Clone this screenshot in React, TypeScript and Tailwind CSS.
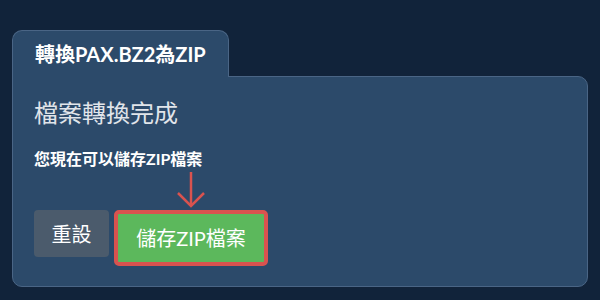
export default function App() {
  return (
    <div
      className="w-[600px] h-[300px] bg-[#11233a] pt-[30px] px-[12px]"
      style={{ fontFamily: '"Lato", "Noto Sans CJK TC", sans-serif' }}
    >
      <div className="relative">
        {/* tab */}
        <div className="relative z-10 w-[217px] h-[47px] rounded-t-[10px] border border-b-0 border-[#4a6585] bg-[#2c4a6a] flex items-center pl-[22px]">
          <span className="text-[20px] font-bold text-white">轉換PAX.BZ2為ZIP</span>
        </div>
        {/* panel */}
        <div className="-mt-px h-[211px] w-[576px] rounded-b-[10px] rounded-tr-[10px] border border-[#4a6585] bg-[#2c4a6a] pl-[21px] pt-[20px]">
          <div className="text-[24px] leading-[32px] font-normal text-[#e1e5ea]">檔案轉換完成</div>
          <div className="mt-[19px] text-[16px] leading-[22px] font-bold text-white">您現在可以儲存ZIP檔案</div>
          <div className="mt-[40px] flex items-start gap-[5px]">
            <button className="h-[47px] w-[75px] rounded-[4px] bg-[#4b5b6c] text-[20px] text-white">
              重設
            </button>
            <div className="relative">
              <svg width="28" height="36" viewBox="0 0 28 36" className="absolute left-[63px] -top-[38px]">
                <line x1="14" y1="0" x2="14" y2="34" stroke="#d9534f" strokeWidth="2.5" />
                <polyline points="1,21 14,34 27,21" fill="none" stroke="#d9534f" strokeWidth="2.5" />
              </svg>
              <button className="h-[56px] w-[154px] rounded-[5px] border-[4px] border-[#d9534f] bg-[#5cb85c] text-[20px] text-white">
                儲存ZIP檔案
              </button>
            </div>
          </div>
        </div>
      </div>
    </div>
  );
}
